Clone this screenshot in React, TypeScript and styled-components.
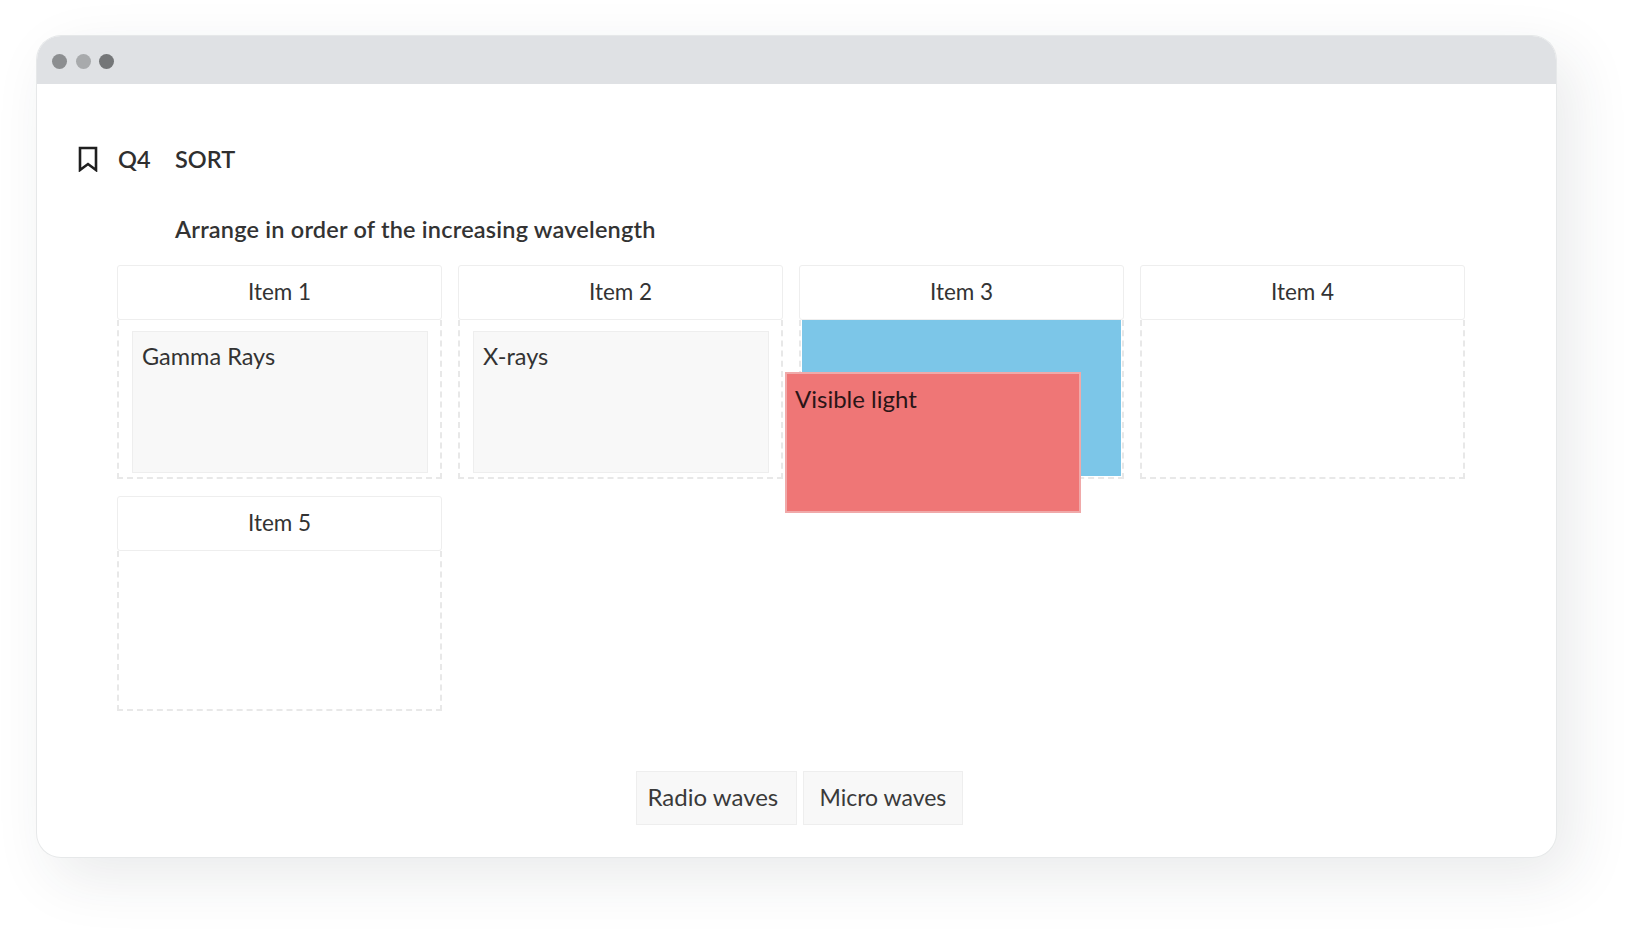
import * as React from "react";
import styled, { createGlobalStyle } from "styled-components";

const GlobalStyle = createGlobalStyle`
  html, body {
    margin: 0;
    background: #ffffff;
    font-family: "Lato", "Noto Sans", sans-serif;
    color: #333333;
    overflow: hidden;
  }
`;

const Page = styled.div`
  width: 1649px;
  height: 951px;
  padding: 36px 0 0 37px;
  box-sizing: border-box;
`;

const Window = styled.div`
  width: 1519px;
  height: 821px;
  background: #ffffff;
  border-radius: 24px;
  box-shadow: 0 0 0 1px #e6e8e9, 16px 20px 60px rgba(40, 50, 60, 0.1);
  overflow: hidden;
`;

const TitleBar = styled.div`
  height: 48px;
  background: #dfe1e4;
  display: flex;
  align-items: center;
  gap: 8.5px;
  padding: 2px 0 0 15px;
  box-sizing: border-box;
`;

const Dot = styled.span<{ $tone: string }>`
  width: 15px;
  height: 15px;
  border-radius: 50%;
  background: ${(p) => p.$tone};
`;

const Body = styled.div`
  padding: 60px 0 0 41px;
`;

const QuestionHead = styled.div`
  display: flex;
  align-items: center;
  height: 30px;
  font-size: 23.5px;
  font-weight: 600;
  color: #2f2f2f;
`;

const Mark = styled.svg`
  width: 20px;
  height: 26px;
  margin-right: 20px;
`;

const QuestionNo = styled.span`
  width: 57px;
`;

const Prompt = styled.div`
  margin: 40px 0 0 97px;
  font-size: 23.5px;
  letter-spacing: 0.2px;
  line-height: 30px;
  font-weight: 600;
  color: #333333;
`;

const Board = styled.div`
  display: grid;
  grid-template-columns: repeat(4, 325px);
  column-gap: 16px;
  row-gap: 17px;
  margin: 20.5px 0 0 39px;
`;

const Slot = styled.div`
  position: relative;
`;

const SlotHead = styled.div`
  height: 55px;
  box-sizing: border-box;
  border: 1.5px solid #eeeeee;
  border-radius: 3px;
  display: flex;
  align-items: center;
  justify-content: center;
  padding-bottom: 2px;
  font-size: 22.5px;
  color: #333333;
`;

const DropZone = styled.div<{ $tall?: boolean }>`
  height: ${(p) => (p.$tall ? 160 : 159)}px;
  box-sizing: border-box;
  border: 2px dashed #e8e8e8;
  border-top: none;
  padding: 11px 12px 5px 13px;
`;

const Answer = styled.div`
  height: 142px;
  box-sizing: border-box;
  background: #f8f8f8;
  border: 1px solid #eeeeee;
  padding: 9px 9px;
  font-size: 23.5px;
  line-height: 30px;
  color: #333333;
`;

const HoverFill = styled.div`
  height: 156px;
  margin: -11px -11px 0 -12px;
  background: #7cc6e8;
`;

const Dragged = styled.div`
  position: absolute;
  left: -14px;
  top: 107px;
  width: 296px;
  height: 141px;
  box-sizing: border-box;
  background: #ef7676;
  border: 2px solid #f0a9a9;
  padding: 10px 8px;
  font-size: 24px;
  line-height: 30px;
  color: #2a1517;
`;

const Tray = styled.div`
  display: flex;
  justify-content: center;
  gap: 6px;
  margin: 60px 0 0 -36px;
`;

const Chip = styled.div<{ $width: number; $inset: number; $tight?: boolean }>`
  height: 54px;
  width: ${(p) => p.$width}px;
  box-sizing: border-box;
  background: #f8f8f8;
  border: 1.5px solid #eeeeee;
  display: flex;
  align-items: center;
  padding: 0 0 2px ${(p) => p.$inset}px;
  font-size: ${(p) => (p.$tight ? 23 : 24)}px;
  color: #3a3a3a;
`;

const slots = ["Item 1", "Item 2", "Item 3", "Item 4", "Item 5"];
const placed: Record<string, string> = {
  "Item 1": "Gamma Rays",
  "Item 2": "X-rays",
};

export default function App() {
  return (
    <Page>
      <GlobalStyle />
      <Window>
        <TitleBar>
          <Dot $tone="#8c8e90" />
          <Dot $tone="#a8aaac" />
          <Dot $tone="#747678" />
        </TitleBar>
        <Body>
          <QuestionHead>
            <Mark viewBox="0 0 20 26" fill="none">
              <path
                d="M2 2H18V24L10 18L2 24Z"
                stroke="#1f1f1f"
                strokeWidth="2.6"
                strokeLinejoin="miter"
              />
            </Mark>
            <QuestionNo>Q4</QuestionNo>
            <span>SORT</span>
          </QuestionHead>
          <Prompt>Arrange in order of the increasing wavelength</Prompt>
          <Board>
            {slots.map((name) => (
              <Slot key={name}>
                <SlotHead>{name}</SlotHead>
                <DropZone $tall={name === "Item 5"}>
                  {placed[name] && <Answer>{placed[name]}</Answer>}
                  {name === "Item 3" && <HoverFill />}
                </DropZone>
                {name === "Item 3" && <Dragged>Visible light</Dragged>}
              </Slot>
            ))}
          </Board>
          <Tray>
            <Chip $width={161} $inset={11}>Radio waves</Chip>
            <Chip $width={160} $inset={16} $tight>Micro waves</Chip>
          </Tray>
        </Body>
      </Window>
    </Page>
  );
}
